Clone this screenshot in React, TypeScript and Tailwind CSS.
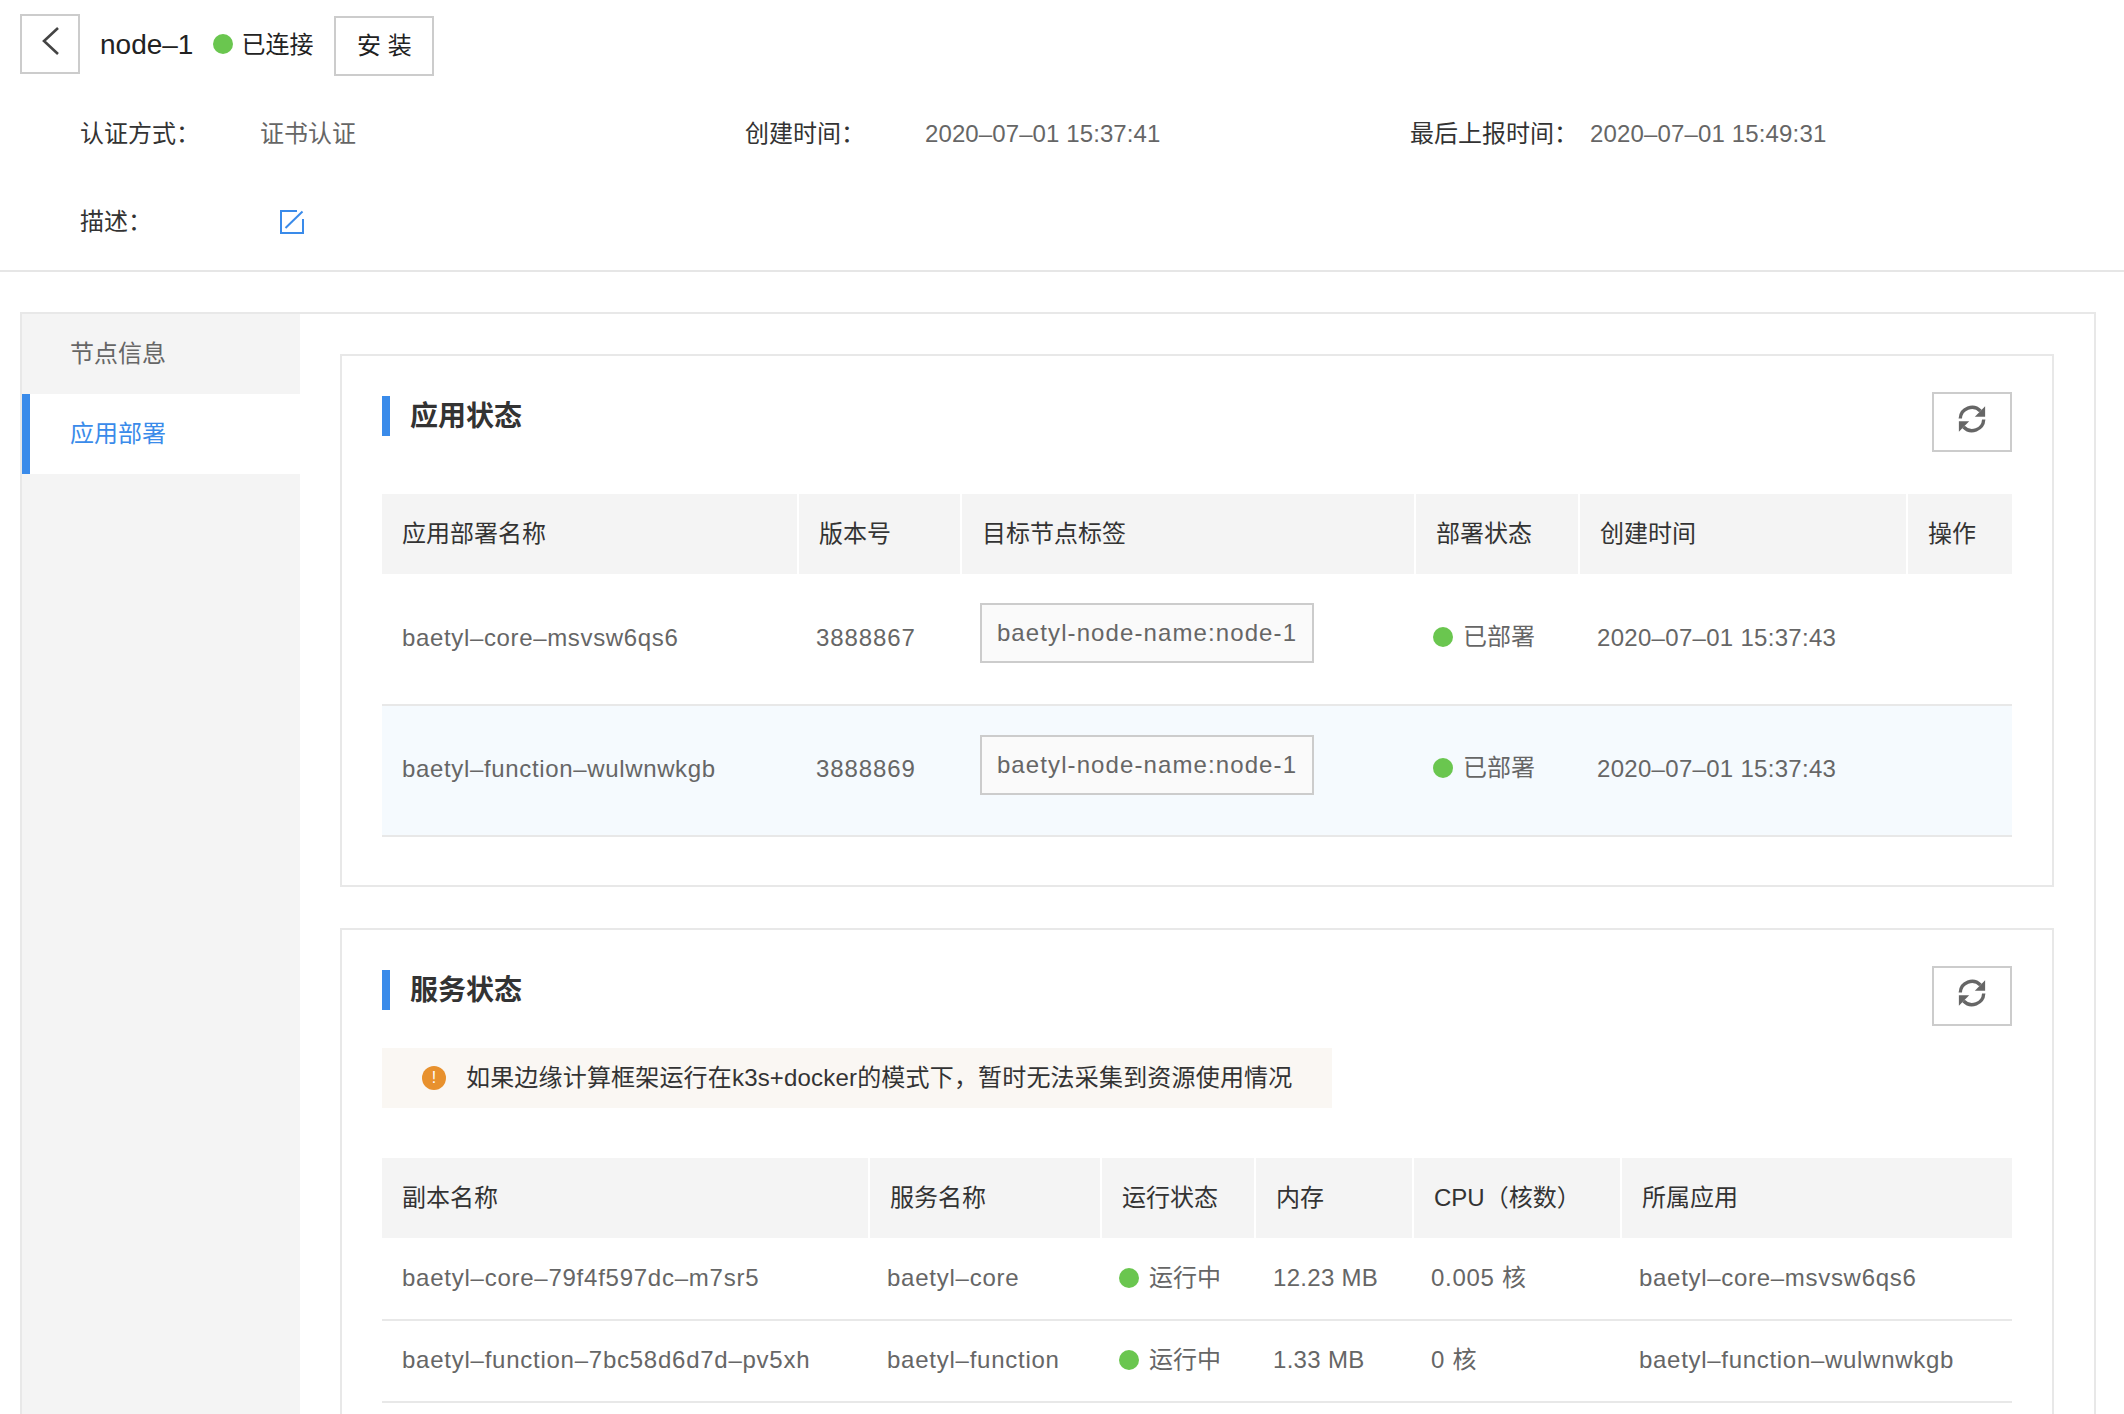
const fontStack = "[font-family:'Liberation_Sans','Noto_Sans_CJK_SC',sans-serif]";

const appRows = [
  { name: "baetyl–core–msvsw6qs6", version: "3888867", time: "2020–07–01 15:37:43" },
  { name: "baetyl–function–wulwnwkgb", version: "3888869", time: "2020–07–01 15:37:43" },
];

const serviceRows = [
  {
    replica: "baetyl–core–79f4f597dc–m7sr5",
    service: "baetyl–core",
    memory: "12.23 MB",
    cpu: "0.005 核",
    app: "baetyl–core–msvsw6qs6",
  },
  {
    replica: "baetyl–function–7bc58d6d7d–pv5xh",
    service: "baetyl–function",
    memory: "1.33 MB",
    cpu: "0 核",
    app: "baetyl–function–wulwnwkgb",
  },
];

const Dot = () => <span className="block h-5 w-5 shrink-0 rounded-full bg-[#6ac64f]" />;

const RefreshIcon = () => (
  <svg viewBox="0 0 32 32" className="mb-[7px] h-[30px] w-[30px]" fill="none">
    <path d="M3.5 15.5 A12.5 12.5 0 0 1 25 7.5" stroke="#666" strokeWidth="3.6" />
    <path d="M28.5 16.5 A12.5 12.5 0 0 1 7 24.5" stroke="#666" strokeWidth="3.6" />
    <path d="M30 2.5 V13.5 H19 Z" fill="#666" />
    <path d="M2 29.5 V18.5 H13 Z" fill="#666" />
  </svg>
);

const SectionHead = ({ title }: { title: string }) => (
  <div className="flex items-start justify-between">
    <div className="mt-1 flex h-10 items-center gap-5">
      <span className="h-10 w-2 bg-[#3a8bea]" />
      <h2 className="pt-0.5 text-[28px] font-bold text-[#333]">{title}</h2>
    </div>
    <button className="flex h-[60px] w-20 items-center justify-center border-2 border-[#ccc] bg-white">
      <RefreshIcon />
    </button>
  </div>
);

const Th = ({ children }: { children: React.ReactNode }) => (
  <th className="h-20 border-r-2 border-white bg-[#f4f4f4] pl-5 text-left text-2xl font-normal text-[#333] last:border-r-0">
    {children}
  </th>
);

export default function App() {
  return (
    <div className={`h-screen overflow-hidden bg-white text-2xl text-[#666] ${fontStack}`}>
      <div className="flex h-[76px] items-start pl-5">
        <button className="mt-3.5 flex h-[60px] w-[60px] items-center justify-center border-2 border-[#ccc]">
          <svg viewBox="0 0 18 28" className="mb-1.5 h-7 w-[18px]" fill="none">
            <path d="M17 1 L3 14 L17 27" stroke="#444" strokeWidth="2.6" />
          </svg>
        </button>
        <span className="ml-5 mt-[25px] text-[28px] leading-10 text-[#222]">node–1</span>
        <span className="ml-5 mt-[34px]">
          <Dot />
        </span>
        <span className="ml-2 mt-[27px] leading-9 text-[#222]">已连接</span>
        <button className="ml-[21px] mt-4 h-[60px] w-[100px] border-2 border-[#ccc] text-[#222]">安 装</button>
      </div>

      <div className="grid h-[196px] grid-cols-[665px_665px_1fr] content-start gap-y-[52px] border-b-2 border-[#e6e6e6] pl-20 pt-10">
        <div className="flex h-9 items-center">
          <span className="w-[180px] text-[#333]">认证方式：</span>
          <span>证书认证</span>
        </div>
        <div className="flex h-9 items-center">
          <span className="w-[180px] text-[#333]">创建时间：</span>
          <span className="tracking-[0.1px]">2020–07–01 15:37:41</span>
        </div>
        <div className="flex h-9 items-center">
          <span className="w-[180px] text-[#333]">最后上报时间：</span>
          <span className="tracking-[0.15px]">2020–07–01 15:49:31</span>
        </div>
        <div className="flex h-9 items-center">
          <span className="w-[200px] text-[#333]">描述：</span>
          <svg viewBox="0 0 24 24" className="h-6 w-6" fill="none">
            <path d="M17 1 H1 V23 H23 V9" stroke="#3a8bea" strokeWidth="2" />
            <path d="M22.5 1.5 L5.5 18" stroke="#3a8bea" strokeWidth="2" />
          </svg>
        </div>
      </div>

      <div className="ml-5 mr-7 mt-10 flex h-[1200px] border-2 border-[#e8e8e8]">
        <div className="w-[278px] shrink-0 bg-[#f4f4f4]">
          <div className="flex h-20 items-center pl-12">节点信息</div>
          <div className="flex h-20 items-center border-l-8 border-[#3a8bea] bg-white pl-10 text-[#3a8bea]">
            应用部署
          </div>
        </div>

        <div className="flex-1 pl-10 pr-10 pt-10">
          <section className="h-[533px] border-2 border-[#e8e8e8] px-10 pt-[36px]">
            <SectionHead title="应用状态" />
            <table className="mt-[42px] w-full table-fixed border-collapse">
              <colgroup>
                <col className="w-[416px]" />
                <col className="w-[163px]" />
                <col className="w-[454px]" />
                <col className="w-[164px]" />
                <col className="w-[328px]" />
                <col />
              </colgroup>
              <thead>
                <tr>
                  <Th>应用部署名称</Th>
                  <Th>版本号</Th>
                  <Th>目标节点标签</Th>
                  <Th>部署状态</Th>
                  <Th>创建时间</Th>
                  <Th>操作</Th>
                </tr>
              </thead>
              <tbody>
                {appRows.map((row, i) => (
                  <tr key={row.name} className={`h-[131px] border-b-2 border-[#e8e8e8] ${i === 1 ? "bg-[#f5fafe]" : ""}`}>
                    <td className="pb-[3px] pl-5 tracking-[0.65px]">{row.name}</td>
                    <td className="pb-[3px] pl-[18px] tracking-[0.9px]">{row.version}</td>
                    <td className="pl-[19px]">
                      <span className="-mt-2 mb-1 flex h-[60px] w-[334px] items-center justify-center border-2 border-[#ccc] bg-[#fafafa] tracking-[1.1px]">
                        baetyl-node-name:node-1
                      </span>
                    </td>
                    <td className="pb-[3px] pl-[18px]">
                      <div className="-mt-0.5 flex items-center gap-2.5">
                        <Dot />
                        <span>已部署</span>
                      </div>
                    </td>
                    <td className="pb-[3px] pl-[18px] tracking-[0.3px]">{row.time}</td>
                    <td />
                  </tr>
                ))}
              </tbody>
            </table>
          </section>

          <section className="mt-[41px] h-[700px] border-2 border-[#e8e8e8] px-10 pt-[36px]">
            <SectionHead title="服务状态" />
            <div className="mt-[22px] flex h-[60px] w-[950px] items-center gap-[20px] bg-[#faf7f3] pl-10 text-[#333]">
              <span className="flex h-6 w-6 shrink-0 items-center justify-center rounded-full bg-[#e8912d] text-base leading-none text-white">
                !
              </span>
              <span className="tracking-[0.18px]">如果边缘计算框架运行在k3s+docker的模式下，暂时无法采集到资源使用情况</span>
            </div>
            <table className="mt-[50px] w-full table-fixed border-collapse">
              <colgroup>
                <col className="w-[487px]" />
                <col className="w-[232px]" />
                <col className="w-[154px]" />
                <col className="w-[158px]" />
                <col className="w-[208px]" />
                <col />
              </colgroup>
              <thead>
                <tr>
                  <Th>副本名称</Th>
                  <Th>服务名称</Th>
                  <Th>运行状态</Th>
                  <Th>内存</Th>
                  <Th>CPU（核数）</Th>
                  <Th>所属应用</Th>
                </tr>
              </thead>
              <tbody>
                {serviceRows.map((row) => (
                  <tr key={row.replica} className="h-[82px] border-b-2 border-[#e8e8e8]">
                    <td className="pb-0.5 pl-5 tracking-[0.75px]">{row.replica}</td>
                    <td className="pb-0.5 pl-[18px] tracking-[0.75px]">{row.service}</td>
                    <td className="pb-0.5 pl-[18px]">
                      <div className="flex items-center gap-2.5">
                        <Dot />
                        <span>运行中</span>
                      </div>
                    </td>
                    <td className="pb-0.5 pl-[18px] tracking-[0.3px]">{row.memory}</td>
                    <td className="pb-0.5 pl-[18px] tracking-[0.7px]">{row.cpu}</td>
                    <td className="pb-0.5 pl-[18px] tracking-[0.7px]">{row.app}</td>
                  </tr>
                ))}
              </tbody>
            </table>
          </section>
        </div>
      </div>
    </div>
  );
}
